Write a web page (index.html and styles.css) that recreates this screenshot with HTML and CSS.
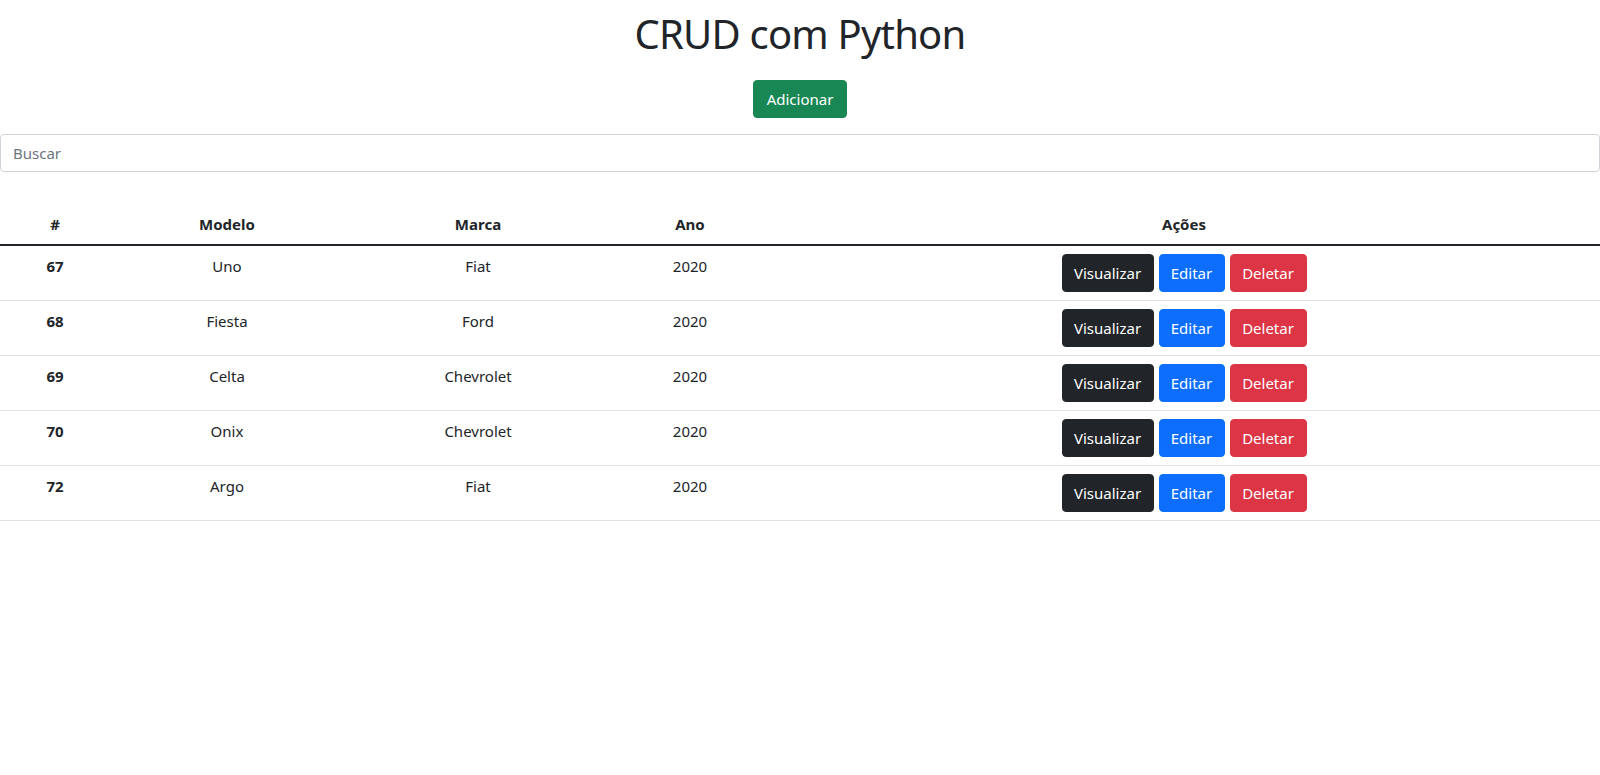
FILE: index.html
```html
<!DOCTYPE html>
<html lang="pt-BR">
<head>
<meta charset="utf-8">
<title>CRUD com Python</title>
<link rel="stylesheet" href="styles.css">
</head>
<body>
<div class="page">
  <h1 class="title">CRUD com Python</h1>
  <div class="add-wrap"><button class="btn btn-success">Adicionar</button></div>
  <input class="search" type="text" placeholder="Buscar">
  <table class="table">
    <colgroup>
      <col class="c-id"><col class="c-modelo"><col class="c-marca"><col class="c-ano"><col class="c-acoes">
    </colgroup>
    <thead>
      <tr><th>#</th><th>Modelo</th><th>Marca</th><th>Ano</th><th>Ações</th></tr>
    </thead>
    <tbody>
      <tr><th>67</th><td>Uno</td><td>Fiat</td><td>2020</td><td><div class="actions"><button class="btn btn-dark">Visualizar</button><button class="btn btn-primary">Editar</button><button class="btn btn-danger">Deletar</button></div></td></tr>
      <tr><th>68</th><td>Fiesta</td><td>Ford</td><td>2020</td><td><div class="actions"><button class="btn btn-dark">Visualizar</button><button class="btn btn-primary">Editar</button><button class="btn btn-danger">Deletar</button></div></td></tr>
      <tr><th>69</th><td>Celta</td><td>Chevrolet</td><td>2020</td><td><div class="actions"><button class="btn btn-dark">Visualizar</button><button class="btn btn-primary">Editar</button><button class="btn btn-danger">Deletar</button></div></td></tr>
      <tr><th>70</th><td>Onix</td><td>Chevrolet</td><td>2020</td><td><div class="actions"><button class="btn btn-dark">Visualizar</button><button class="btn btn-primary">Editar</button><button class="btn btn-danger">Deletar</button></div></td></tr>
      <tr><th>72</th><td>Argo</td><td>Fiat</td><td>2020</td><td><div class="actions"><button class="btn btn-dark">Visualizar</button><button class="btn btn-primary">Editar</button><button class="btn btn-danger">Deletar</button></div></td></tr>
    </tbody>
  </table>
</div>
</body>
</html>
```

FILE: styles.css
```css
* { box-sizing: border-box; }
html, body {
  margin: 0;
  padding: 0;
  background: #fff;
}
body {
  font-family: "Noto Sans", "Open Sans", "DejaVu Sans", sans-serif;
  font-size: 16px;
  line-height: 1.5;
  color: #212529;
}
.page {
  display: flex;
  flex-direction: column;
}
.title {
  margin: 10px 0 0;
  font-size: 40px;
  font-weight: 400;
  line-height: 1.2;
  text-align: center;
  letter-spacing: -0.8px;
}
.add-wrap {
  display: flex;
  justify-content: center;
  margin-top: 22px;
}
.btn {
  display: inline-flex;
  align-items: center;
  justify-content: center;
  height: 38px;
  padding: 0 12px;
  font-family: inherit;
  font-size: 15px;
  line-height: 24px;
  color: #fff;
  border: 1px solid transparent;
  border-radius: 4px;
  cursor: pointer;
}
.btn-success { background: #198754; border-color: #198754; width: 94px; }
.btn-dark { background: #212529; border-color: #212529; width: 92px; }
.btn-primary { background: #0d6efd; border-color: #0d6efd; width: 66px; }
.btn-danger { background: #dc3545; border-color: #dc3545; width: 77px; }
.search {
  display: block;
  width: 100%;
  height: 38px;
  margin-top: 16px;
  padding: 6px 12px;
  font-family: inherit;
  font-size: 15px;
  line-height: 24px;
  color: #212529;
  background: #fff;
  border: 1px solid #ced4da;
  border-radius: 4px;
}
.search::placeholder { color: #6c757d; }
.table {
  width: 100%;
  margin-top: 32px;
  border-collapse: collapse;
  table-layout: fixed;
  vertical-align: top;
  font-size: 15px;
}
.c-id { width: 110px; }
.c-modelo { width: 234px; }
.c-marca { width: 268px; }
.c-ano { width: 156px; }
.table th, .table td {
  padding: 8px;
  text-align: center;
  line-height: 24px;
  border-bottom: 1px solid #dee2e6;
  vertical-align: top;
}
.table th { font-weight: 700; }
.table thead th { border-bottom: 2px solid #212529; }
.actions {
  display: flex;
  justify-content: center;
  gap: 5px;
}
```
